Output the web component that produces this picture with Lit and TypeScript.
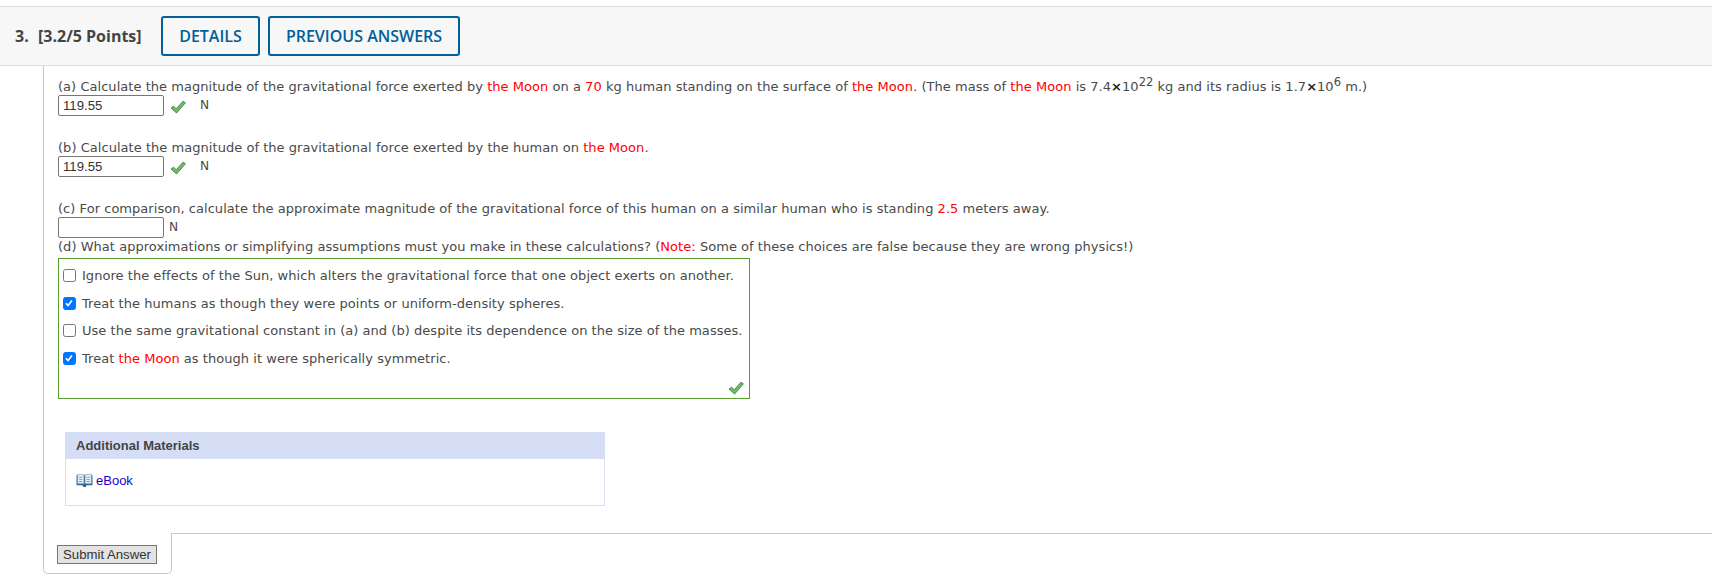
import { LitElement, html, css } from "lit";
import { customElement } from "lit/decorators.js";

const check = html`<svg class="check" viewBox="0 0 16 14" width="16" height="14"><path d="M1 8 L3.6 6.2 L6.2 8.8 L13 1.2 L15.4 2.8 L6.6 13 Z" fill="#6dbb6d" stroke="#4c8c4c" stroke-width="1"/></svg>`;
const book = html`<svg class="book" viewBox="0 0 16 14" width="17" height="15">
  <path d="M0.5 2 L0.5 11.5 L6 11.5 L7 13 L9 13 L10 11.5 L15.5 11.5 L15.5 2 Z" fill="#2f6496"/>
  <path d="M1.5 1 L7.5 1.5 L7.5 10 L1.5 10 Z" fill="#e6edf3" stroke="#6d8aa6" stroke-width=".5"/>
  <path d="M14.5 1 L8.5 1.5 L8.5 10 L14.5 10 Z" fill="#e6edf3" stroke="#6d8aa6" stroke-width=".5"/>
  <path d="M3 4H6M3 6H6M3 8H6M10 4H13M10 6H13M10 8H13" stroke="#8ea3b5" stroke-width="1"/>
</svg>`;
const tick = html`<svg viewBox="0 0 13 13" width="11" height="11"><path d="M2.2 6.2 L4.8 8.8 L9.4 3" fill="none" stroke="#fff" stroke-width="2"/></svg>`;

const moon = html`<span class="red">the Moon</span>`;
const times = html`<b class="x">×</b>`;

@customElement("app-root")
export class AppRoot extends LitElement {
  static styles = css`
    :host { display: block; width: 1712px; height: 584px; overflow: hidden; background: #fff; color: #4a4a4a; font-family: "DejaVu Sans", Verdana, sans-serif; font-size: 13px; letter-spacing: 0.04px; }
    .head { margin-top: 6px; height: 58px; border-top: 1px solid #ddd; border-bottom: 1px solid #ddd; background: #f7f7f7; display: flex; align-items: center; padding-left: 15px; box-sizing: content-box; font-family: "Open Sans", sans-serif; letter-spacing: 0; color: #444; }
    .num { font-weight: 700; font-size: 16px; width: 23px; }
    .pts { font-weight: 700; font-size: 16px; width: 123px; }
    .btn { box-sizing: border-box; height: 40px; border: 2px solid #00609a; border-radius: 3px; color: #00609a; font-size: 16px; font-weight: 600; display: flex; align-items: center; justify-content: center; margin-right: 8px; }
    .b1 { width: 99px; }
    .b2 { width: 192px; }
    .panel { margin-left: 43px; border-left: 1px solid #c8c8c8; padding: 11.5px 0 0 14px; height: 467px; box-sizing: border-box; }
    .q { height: 17px; line-height: 17px; white-space: nowrap; }
    .red { color: #f00; }
    .x { color: #222; }
    sup { font-size: 11.5px; line-height: 0; vertical-align: 5px; }
    .ans { display: flex; align-items: center; height: 21px; margin-bottom: 23px; }
    .ans.tight { margin-bottom: 0; }
    .inp { box-sizing: border-box; width: 106px; height: 21px; border: 1px solid #767676; border-radius: 2px; font: 13.2px "Liberation Sans", sans-serif; letter-spacing: 0; color: #333; padding: 0 4px; line-height: 19px; background: #fff; }
    .check { margin: 4px 0 0 6px; }
    .unit { font: 12.2px "DejaVu Sans", sans-serif; }
    .ans .check + .unit { margin-left: 14px; }
    .inp + .unit { margin-left: 5px; }
    .box { box-sizing: border-box; width: 692px; height: 141px; border: 1px solid #5a9e2f; margin-top: 3px; padding: 3px 4px; position: relative; }
    .opt { display: flex; align-items: center; height: 27.7px; white-space: nowrap; }
    .opt span.t { white-space: pre; }
    .cb { box-sizing: border-box; width: 13px; height: 13px; border: 1px solid #767676; border-radius: 2.5px; margin-right: 6px; flex: none; background: #fff; display: flex; }
    .cb.on { background: #0075ff; border-color: #0075ff; }
    .boxcheck { position: absolute; right: 5px; bottom: 3px; }
    .boxcheck .check { margin: 0; display: block; }
    .am { box-sizing: border-box; width: 540px; height: 74px; margin: 33.5px 0 0 7px; border: 1px solid #d6def5; border-top: none; font-family: "Liberation Sans", sans-serif; letter-spacing: 0; }
    .am h4 { margin: 0; height: 27px; line-height: 27px; background: #d6def5; padding-left: 10px; font-size: 13px; font-weight: 700; color: #444; }
    .am .link { display: flex; align-items: center; padding: 14px 0 0 10px; gap: 3px; color: #2200cc; font-size: 13px; }
    .foot { display: flex; align-items: flex-start; }
    .tab { box-sizing: border-box; width: 129px; height: 41px; margin-left: 43px; border: 1px solid #c8c8c8; border-top: none; border-radius: 0 0 5px 5px; padding: 12px 0 0 13px; }
    .rest { flex: 1; border-top: 1px solid #c8c8c8; }
    .submit { box-sizing: border-box; width: 100px; height: 19px; border: 1px solid #767676; background: #e3e3e3; font: 13.2px/17px "Liberation Sans", sans-serif; letter-spacing: 0; color: #333; text-align: center; }
  `;

  render() {
    return html`
      <div class="head">
        <span class="num">3.</span><span class="pts">[3.2/5 Points]</span>
        <div class="btn b1">DETAILS</div>
        <div class="btn b2">PREVIOUS ANSWERS</div>
      </div>
      <div class="panel">
        <div class="q">(a) Calculate the magnitude of the gravitational force exerted by ${moon} on a <span class="red">70</span> kg human standing on the surface of ${moon}. (The mass of ${moon} is 7.4${times}10<sup>22</sup> kg and its radius is 1.7${times}10<sup>6</sup> m.)</div>
        <div class="ans"><div class="inp">119.55</div>${check}<span class="unit">N</span></div>
        <div class="q">(b) Calculate the magnitude of the gravitational force exerted by the human on ${moon}.</div>
        <div class="ans"><div class="inp">119.55</div>${check}<span class="unit">N</span></div>
        <div class="q">(c) For comparison, calculate the approximate magnitude of the gravitational force of this human on a similar human who is standing <span class="red">2.5</span> meters away.</div>
        <div class="ans tight"><div class="inp"></div><span class="unit">N</span></div>
        <div class="q">(d) What approximations or simplifying assumptions must you make in these calculations? (<span class="red">Note:</span> Some of these choices are false because they are wrong physics!)</div>
        <div class="box">
          <div class="opt"><span class="cb"></span><span class="t">Ignore the effects of the Sun, which alters the gravitational force that one object exerts on another.</span></div>
          <div class="opt"><span class="cb on">${tick}</span><span class="t">Treat the humans as though they were points or uniform-density spheres.</span></div>
          <div class="opt"><span class="cb"></span><span class="t">Use the same gravitational constant in (a) and (b) despite its dependence on the size of the masses.</span></div>
          <div class="opt"><span class="cb on">${tick}</span><span class="t">Treat ${moon} as though it were spherically symmetric.</span></div>
          <div class="boxcheck">${check}</div>
        </div>
        <div class="am">
          <h4>Additional Materials</h4>
          <div class="link">${book}<span>eBook</span></div>
        </div>
      </div>
      <div class="foot">
        <div class="tab"><div class="submit">Submit Answer</div></div>
        <div class="rest"></div>
      </div>
    `;
  }
}
